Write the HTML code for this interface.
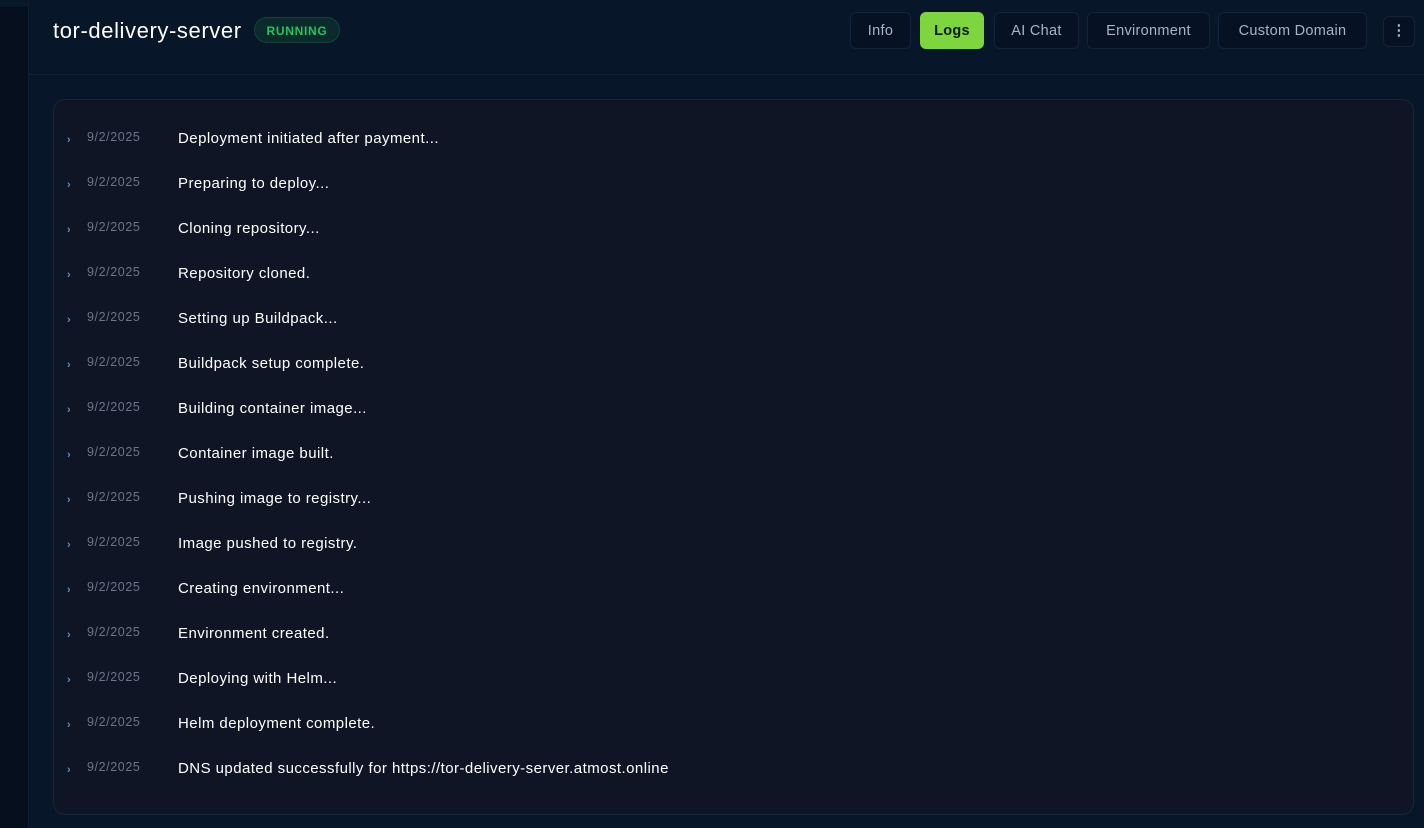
<!DOCTYPE html><html><head><style>
body{margin:0;width:1424px;height:828px;background:#071629;font-family:"Liberation Sans",sans-serif;overflow:hidden;position:relative}
.side{position:absolute;left:0;top:0;width:28px;height:828px;background:#050f1e;border-right:1px solid #0f1d31}
.side:before{content:"";position:absolute;left:0;top:0;width:28px;height:7px;background:#08182b}
.title{position:absolute;left:53px;top:18px;color:#fff;font-size:22px;letter-spacing:0.6px}
.badge{position:absolute;left:254px;top:17px;width:86px;height:26px;border-radius:14px;background:#0b2a2b;border:1px solid #164238;color:#22c55e;font-size:12px;font-weight:bold;text-align:center;line-height:26px;box-sizing:border-box;letter-spacing:0.7px}
.hr{position:absolute;left:29px;right:0;top:74px;height:1px;background:#11223a}
.btn{position:absolute;top:12px;height:37px;border:1px solid #15233a;border-radius:6px;background:#061224;color:#a8b4c6;font-size:14.5px;letter-spacing:0.3px;text-align:center;line-height:37px;box-sizing:border-box}
.btn.on{background:#7ed63e;border-color:#7ed63e;color:#0a1a0a;font-weight:600}
.panel{position:absolute;left:53px;top:99px;width:1361px;height:716px;background:#0f1525;border:1px solid #1a2538;border-radius:12px;box-sizing:border-box}
.row{position:absolute;left:0;height:20px;line-height:20px}
.ch{position:absolute;left:13px;color:#5b8fc7;font-size:11px;font-weight:bold;top:1px}
.dt{position:absolute;left:33px;color:#6b7585;font-size:12.5px;letter-spacing:0.6px;top:-2px}
.msg{position:absolute;left:124px;color:#fff;font-size:15px;letter-spacing:0.45px;white-space:nowrap}
</style></head><body>
<div class="side"></div>
<div class="title">tor-delivery-server</div>
<div class="badge">RUNNING</div>
<div class="btn" style="left:850px;width:61px">Info</div>
<div class="btn on" style="left:920px;width:64px">Logs</div>
<div class="btn" style="left:994px;width:85px">AI Chat</div>
<div class="btn" style="left:1087px;width:123px">Environment</div>
<div class="btn" style="left:1218px;width:149px">Custom Domain</div>
<div class="btn" style="left:1383px;width:32px;top:16px;height:31px;line-height:29px;font-weight:bold">&#8942;</div>
<div class="hr"></div>
<div class="panel">
<div class="row" style="top:29px"><span class="ch">›</span><span class="dt">9/2/2025</span><span class="msg">Deployment initiated after payment...</span></div>
<div class="row" style="top:74px"><span class="ch">›</span><span class="dt">9/2/2025</span><span class="msg">Preparing to deploy...</span></div>
<div class="row" style="top:119px"><span class="ch">›</span><span class="dt">9/2/2025</span><span class="msg">Cloning repository...</span></div>
<div class="row" style="top:164px"><span class="ch">›</span><span class="dt">9/2/2025</span><span class="msg">Repository cloned.</span></div>
<div class="row" style="top:209px"><span class="ch">›</span><span class="dt">9/2/2025</span><span class="msg">Setting up Buildpack...</span></div>
<div class="row" style="top:254px"><span class="ch">›</span><span class="dt">9/2/2025</span><span class="msg">Buildpack setup complete.</span></div>
<div class="row" style="top:299px"><span class="ch">›</span><span class="dt">9/2/2025</span><span class="msg">Building container image...</span></div>
<div class="row" style="top:344px"><span class="ch">›</span><span class="dt">9/2/2025</span><span class="msg">Container image built.</span></div>
<div class="row" style="top:389px"><span class="ch">›</span><span class="dt">9/2/2025</span><span class="msg">Pushing image to registry...</span></div>
<div class="row" style="top:434px"><span class="ch">›</span><span class="dt">9/2/2025</span><span class="msg">Image pushed to registry.</span></div>
<div class="row" style="top:479px"><span class="ch">›</span><span class="dt">9/2/2025</span><span class="msg">Creating environment...</span></div>
<div class="row" style="top:524px"><span class="ch">›</span><span class="dt">9/2/2025</span><span class="msg">Environment created.</span></div>
<div class="row" style="top:569px"><span class="ch">›</span><span class="dt">9/2/2025</span><span class="msg">Deploying with Helm...</span></div>
<div class="row" style="top:614px"><span class="ch">›</span><span class="dt">9/2/2025</span><span class="msg">Helm deployment complete.</span></div>
<div class="row" style="top:659px"><span class="ch">›</span><span class="dt">9/2/2025</span><span class="msg">DNS updated successfully for https://tor-delivery-server.atmost.online</span></div>
</div>
</body></html>
